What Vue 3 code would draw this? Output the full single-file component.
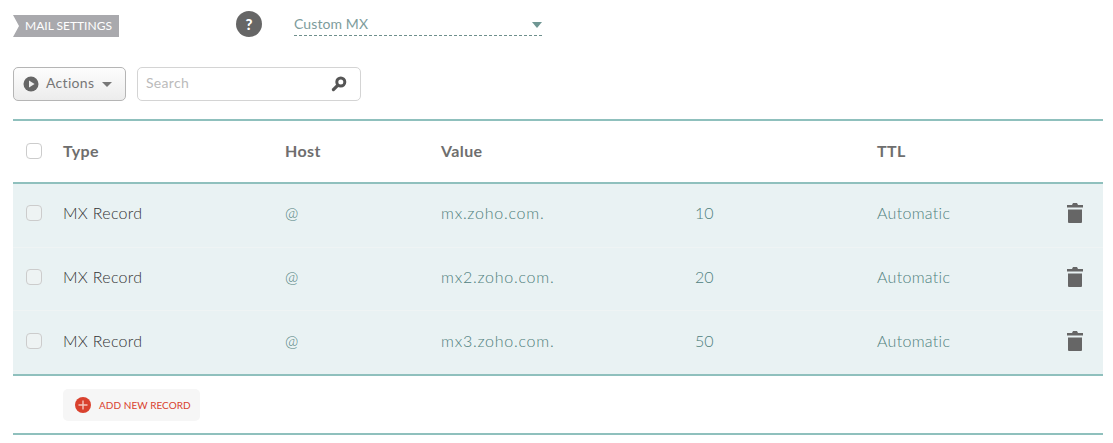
<script setup>
const records = [
  { host: "@", value: "mx.zoho.com.", priority: 10, ttl: "Automatic" },
  { host: "@", value: "mx2.zoho.com.", priority: 20, ttl: "Automatic" },
  { host: "@", value: "mx3.zoho.com.", priority: 50, ttl: "Automatic" },
];
</script>

<template>
  <div class="page">
    <div class="mail-row">
      <div class="mail-label">MAIL SETTINGS</div>
      <div class="help">?</div>
      <div class="select">
        <span>Custom MX</span>
        <i class="select-caret"></i>
      </div>
    </div>

    <div class="toolbar">
      <button class="actions">
        <svg class="play" width="16" height="16" viewBox="0 0 16 16">
          <circle cx="8" cy="8" r="7.5" fill="#666" />
          <path d="M6 4.4 L11.6 8 L6 11.6 Z" fill="#eee" />
        </svg>
        <span>Actions</span>
        <i class="actions-caret"></i>
      </button>
      <div class="search">
        <span>Search</span>
        <svg width="16" height="16" viewBox="0 0 16 16">
          <circle cx="9.8" cy="6" r="4" fill="none" stroke="#555" stroke-width="3" />
          <path d="M6.4 9.6 L2.4 13.6" stroke="#555" stroke-width="3.2" stroke-linecap="round" />
        </svg>
      </div>
    </div>

    <div class="table">
      <div class="row head">
        <i class="check"></i>
        <span>Type</span>
        <span>Host</span>
        <span>Value</span>
        <span></span>
        <span>TTL</span>
        <span></span>
      </div>
      <div class="body">
        <div v-for="r in records" :key="r.value" class="row record">
          <i class="check"></i>
          <span class="type">MX Record</span>
          <span>{{ r.host }}</span>
          <span class="value">{{ r.value }}</span>
          <span>{{ r.priority }}</span>
          <span class="ttl">{{ r.ttl }}</span>
          <svg class="trash" width="16" height="20" viewBox="0 0 16 20">
            <path d="M5 2 L6 0 H10 L11 2 H16 V4.4 H0 V2 Z" fill="#666" />
            <path d="M1 6.4 H15 V19 Q15 20 14 20 H2 Q1 20 1 19 Z" fill="#666" />
          </svg>
        </div>
      </div>
      <div class="add-row">
        <button class="add">
          <svg width="16" height="16" viewBox="0 0 16 16">
            <circle cx="8" cy="8" r="8" fill="#d9412e" />
            <path d="M8 3.5 V12.5 M3.5 8 H12.5" stroke="#f4c6bd" stroke-width="1.4" />
          </svg>
          <span>ADD NEW RECORD</span>
        </button>
      </div>
    </div>
  </div>
</template>

<style>
  body {
    background: #fff;
  }
</style>

<style scoped>
  .page {
    width: 1113px;
    height: 443px;
    overflow: hidden;
    box-sizing: border-box;
    padding: 11px 10px 0 13px;
    font-family: Lato, "Open Sans", sans-serif;
    font-size: 16px;
    font-weight: 300;
    color: #666;
    background: #fff;
  }

  .mail-row {
    display: flex;
    align-items: flex-start;
    height: 26px;
  }

  .mail-label {
    box-sizing: border-box;
    width: 106px;
    height: 22px;
    margin-top: 4px;
    padding-left: 12px;
    background: #a9a9ad;
    color: #fff;
    font-size: 12px;
    font-weight: 400;
    line-height: 22px;
    white-space: nowrap;
    clip-path: polygon(0 0, 100% 0, 100% 100%, 0 100%, 6px 50%);
  }

  .help {
    width: 26px;
    height: 26px;
    margin-left: 117px;
    border-radius: 50%;
    background: #666;
    color: #fff;
    font-size: 15px;
    font-weight: 900;
    line-height: 26px;
    text-align: center;
  }

  .select {
    display: flex;
    align-items: center;
    justify-content: space-between;
    width: 248px;
    height: 24px;
    margin-left: 32px;
    border-bottom: 1px dashed #6f8f8c;
    font-size: 14px;
    font-weight: 400;
    letter-spacing: 0.1px;
    color: #7d9c9c;
  }

  .select-caret {
    width: 0;
    height: 0;
    border-left: 5px solid transparent;
    border-right: 5px solid transparent;
    border-top: 6px solid #6f9693;
    margin-top: 3px;
  }

  .toolbar {
    display: flex;
    gap: 11px;
    margin-top: 30px;
  }

  .actions {
    display: flex;
    align-items: center;
    width: 113px;
    height: 34px;
    padding: 0 0 3px 9px;
    border: 1px solid #b5b5b5;
    border-radius: 5px;
    background: linear-gradient(#fdfdfd, #ececec);
    font: inherit;
    font-size: 14px;
    font-weight: 400;
    letter-spacing: 0.3px;
    color: #777;
  }

  .actions .play {
    margin-top: 3px;
  }

  .actions span {
    margin-left: 7px;
  }

  .actions-caret {
    width: 0;
    height: 0;
    margin-top: 3px;
    margin-left: 8px;
    border-left: 5px solid transparent;
    border-right: 5px solid transparent;
    border-top: 5px solid #777;
  }

  .search {
    display: flex;
    align-items: center;
    justify-content: space-between;
    box-sizing: border-box;
    width: 224px;
    height: 34px;
    padding: 0 13px 3px 8px;
    border: 1px solid #d4d4d4;
    border-radius: 5px;
    font-size: 14px;
    font-weight: 400;
    letter-spacing: 0.3px;
    color: #bbb;
  }

  .search svg {
    margin-top: 3px;
  }

  .table {
    margin-top: 18px;
    border-top: 2px solid #8fc0bd;
    border-bottom: 2px solid #8fc0bd;
  }

  .row {
    display: grid;
    grid-template-columns: 50px 222px 156px 254px 182px 190px 1fr;
    align-items: center;
    box-sizing: border-box;
  }

  .check {
    display: block;
    box-sizing: border-box;
    width: 16px;
    height: 16px;
    margin-left: 13px;
    border: 1px solid #ccc;
    border-radius: 4px;
    background: #fff;
  }

  .head {
    height: 61px;
    padding-bottom: 2px;
    font-weight: 700;
    letter-spacing: 0.4px;
    color: #6e6e6e;
  }

  .body {
    border-top: 2px solid #8fc0bd;
    border-bottom: 2px solid #8fc0bd;
    background: #e9f2f3;
  }

  .record {
    height: 63px;
    padding-bottom: 5px;
    color: #4f807d;
    border-bottom: 1px solid #eff4f4;
  }

  .record:first-child {
    height: 64px;
    padding-bottom: 6px;
  }

  .record:last-child {
    padding-bottom: 4px;
    border-bottom: 0;
  }

  .record .check {
    background: #eef3f3;
  }

  .record .type {
    letter-spacing: 0.3px;
    color: #333;
  }

  .record .value {
    letter-spacing: 0.75px;
  }

  .record .ttl {
    letter-spacing: 0.3px;
  }

  .trash {
    justify-self: start;
  }

  .add-row {
    height: 57px;
    padding: 13px 0 0 50px;
    box-sizing: border-box;
  }

  .add {
    display: flex;
    align-items: center;
    gap: 8px;
    height: 32px;
    width: 137px;
    padding: 0 0 0 12px;
    border: 0;
    border-radius: 5px;
    background: #f6f6f6;
    font: inherit;
    font-size: 10px;
    font-weight: 400;
    letter-spacing: 0.05px;
    white-space: nowrap;
    color: #d9412e;
  }
</style>
